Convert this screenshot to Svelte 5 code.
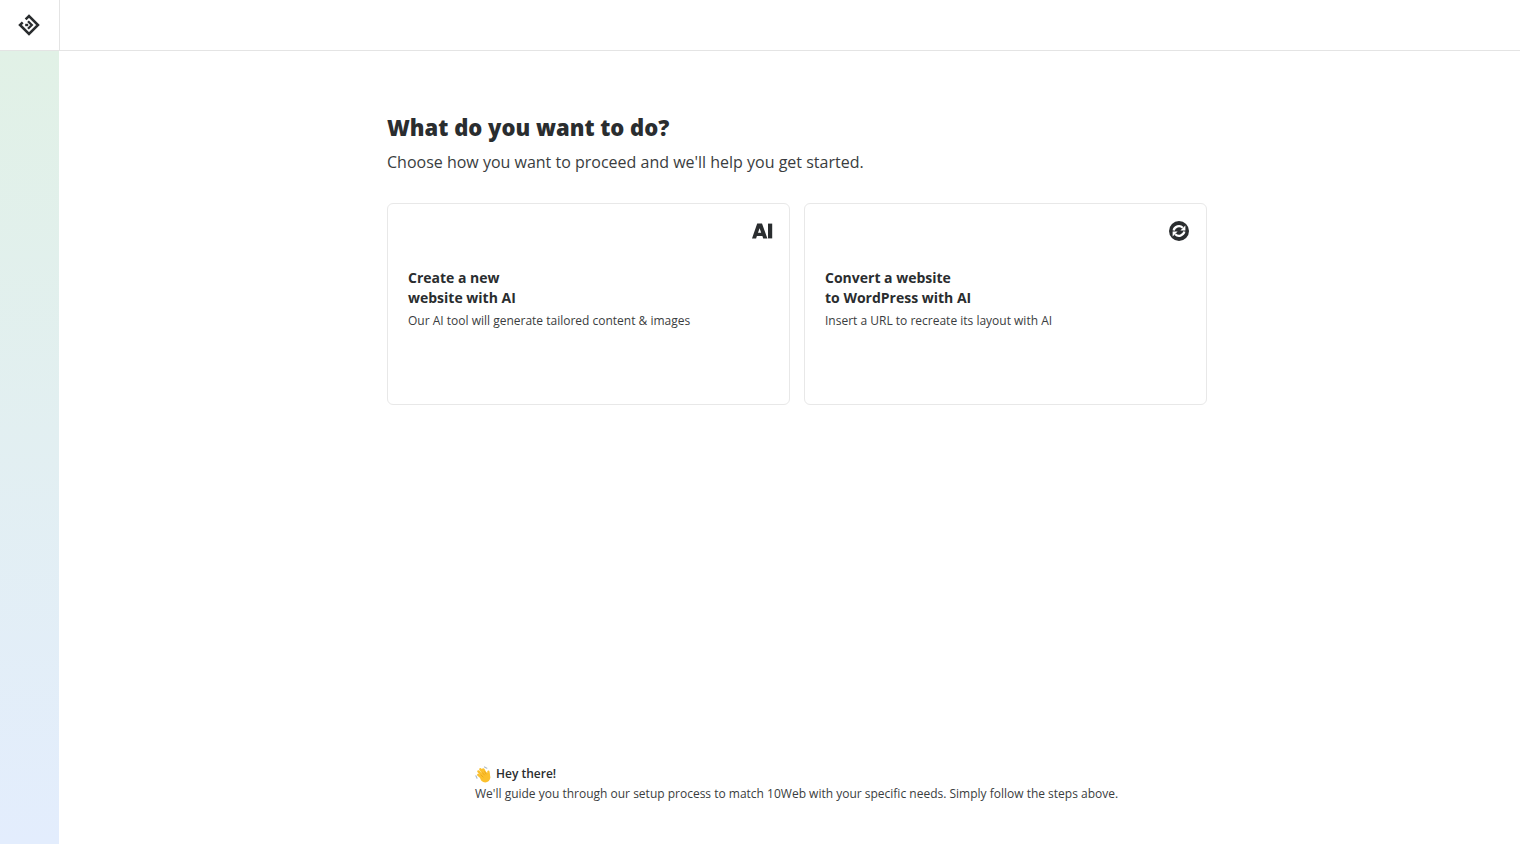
<script>
    const options = [
        { title: ['Create a new', 'website with AI'], text: 'Our AI tool will generate tailored content & images', icon: 'ai' },
        { title: ['Convert a website', 'to WordPress with AI'], text: 'Insert a URL to recreate its layout with AI', icon: 'convert' }
    ];
</script>

<div class="page">
    <header class="topbar">
        <div class="logo">
            <svg width="22" height="22" viewBox="0 0 22 22" fill="none">
                <path d="M7.600 5.400 11 2 20 11 11 20 2 11 4.700 8.300" stroke="#2a2d2f" stroke-width="2.500" />
                <path d="M10 7.200 13.800 11 10 14.800" stroke="#2a2d2f" stroke-width="2.300" />
                <rect x="7.200" y="9.800" width="3" height="2.400" fill="#2a2d2f" />
            </svg>
        </div>
    </header>

    <div class="body">
        <aside class="rail"></aside>
        <main class="main">
            <section class="intro">
                <h1>What do you want to do?</h1>
                <p class="lead">Choose how you want to proceed and we'll help you get started.</p>
                <div class="cards">
                    {#each options as opt}
                        <div class="card">
                            <div class="card-icon">
                                {#if opt.icon === 'ai'}
                                    <svg width="21" height="16" viewBox="0 0 21 16">
                                        <path fill-rule="evenodd" fill="#2a2d2f" d="M5.200 0.600h4.800L15.400 15.400h-4.200l-.8-2.500H4.900l-.8 2.500H0ZM7.600 5.200 6 9.800h3.200Z" />
                                        <rect x="16" y="0.600" width="4.200" height="14.800" fill="#2a2d2f" />
                                    </svg>
                                {:else}
                                    <svg class="convert" width="20" height="20" viewBox="0 0 20 20">
                                        <circle cx="10" cy="10" r="10" fill="#2a2d2f" />
                                        <path d="M4.600 9.400A5.500 5.500 0 0 1 13.800 6.800" fill="none" stroke="#fff" stroke-width="2.200" />
                                        <path d="M16.400 4.600v5h-5Z" fill="#fff" />
                                        <path d="M15.400 10.600A5.500 5.500 0 0 1 6.200 13.200" fill="none" stroke="#fff" stroke-width="2.200" />
                                        <path d="M3.600 15.400v-5h5Z" fill="#fff" />
                                    </svg>
                                {/if}
                            </div>
                            <h2>{opt.title[0]}<br />{opt.title[1]}</h2>
                            <p>{opt.text}</p>
                        </div>
                    {/each}
                </div>
            </section>

            <footer class="hello">
                <div class="hey">
                    <svg class="wave" width="17" height="17" viewBox="0 0 17 17" fill="none" stroke-linecap="round">
                        <path d="M9.500 1 11.800 2.200M.9 9.800 2 12.200" stroke="#aebccb" stroke-width="1.200" />
                        <circle cx="10.200" cy="11.300" r="5.100" fill="#fbc02d" />
                        <path d="M7 12 3.300 8.800M8 10 3.400 5.400M9.500 8.500 5.400 3.300M11 8 8.300 3.400" stroke="#fbc02d" stroke-width="2.400" />
                        <path d="M14 10.500 13.400 5.800" stroke="#fbc02d" stroke-width="2.400" />
                        <path d="M6 8.900 8 11M7.500 6.700 9.500 9M9.700 5.600 11 8" stroke="#e59c16" stroke-width=".7" />
                    </svg>
                    <strong>Hey there!</strong>
                </div>
                <p>We'll guide you through our setup process to match 10Web with your specific needs. Simply follow the steps above.</p>
            </footer>
        </main>
    </div>
</div>

<style>
    :global(body) {
        margin: 0;
        background: #fff;
        font-family: "Open Sans", "Noto Sans", sans-serif;
        color: #2a2d2f;
    }

    .page {
        height: 844px;
        display: flex;
        flex-direction: column;
        overflow: hidden;
    }

    .topbar {
        height: 50px;
        flex: none;
        border-bottom: 1px solid #e4e4e4;
        display: flex;
    }

    .logo {
        width: 59px;
        border-right: 1px solid #e4e4e4;
        display: flex;
        align-items: center;
        justify-content: center;
    }

    .logo svg {
        margin-left: -1px;
    }

    .body {
        flex: 1;
        display: flex;
        min-height: 0;
    }

    .rail {
        width: 59px;
        flex: none;
        background: linear-gradient(180deg, #e1f1e6 0%, #e3edfd 100%);
    }

    .main {
        flex: 1;
        padding: 61px 0 0 15px;
        display: flex;
        flex-direction: column;
        align-items: center;
    }

    .intro {
        width: 820px;
    }

    h1 {
        margin: 0;
        font-size: 22px;
        line-height: 30px;
        font-weight: 800;
    }

    .lead {
        margin: 8px 0 0;
        font-size: 16px;
        line-height: 24px;
        color: #3a3d40;
    }

    .cards {
        margin-top: 29px;
        display: grid;
        grid-template-columns: 403px 403px;
        gap: 14px;
    }

    .card {
        height: 202px;
        box-sizing: border-box;
        border: 1px solid #e8e8e8;
        border-radius: 6px;
        padding: 17px 16px 0 20px;
    }

    .card-icon {
        height: 20px;
        display: flex;
        justify-content: flex-end;
        align-items: center;
        margin-bottom: 27px;
    }

    .convert {
        margin-right: 1px;
    }

    h2 {
        margin: 0;
        font-size: 14px;
        line-height: 20px;
        font-weight: 700;
    }

    .card p {
        margin: 4px 0 0;
        font-size: 12px;
        line-height: 18px;
        color: #3a3d40;
    }

    .hello {
        margin-top: auto;
        margin-bottom: 40px;
        width: 644px;
        font-size: 12px;
        line-height: 20px;
    }

    .hey {
        display: flex;
        align-items: center;
        gap: 4px;
    }

    .hey strong {
        font-weight: 600;
    }

    .hello p {
        margin: 0;
        color: #3a3d40;
    }
</style>
